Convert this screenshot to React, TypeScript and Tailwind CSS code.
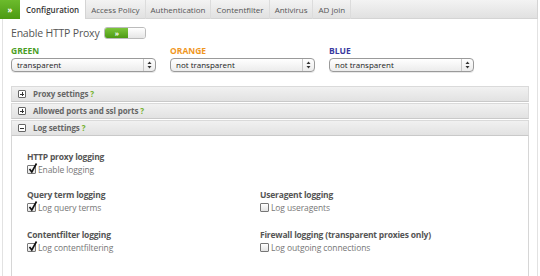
import React from "react";

const F = { fontFamily: '"Open Sans", "DejaVu Sans", sans-serif' };

function Sel({ value }: { value: string }) {
  return (
    <div className="flex items-center justify-between w-[145px] h-[14px] rounded-[4px] border border-[#9a9a9a] bg-gradient-to-b from-white to-[#ececec] pl-[5px] pr-[3px] shadow-[0_1px_0_#e8e8e8]">
      <span className="text-[8px] text-[#222] leading-none">{value}</span>
      <div className="flex items-center h-full border-l border-[#c8c8c8] pl-[3px]">
        <svg width="5" height="8" viewBox="0 0 5 8">
          <path d="M2.5 0.5 L4.5 3 H0.5 Z" fill="#333" />
          <path d="M2.5 7.5 L4.5 5 H0.5 Z" fill="#333" />
        </svg>
      </div>
    </div>
  );
}

function Box({ checked }: { checked: boolean }) {
  return (
    <div className="relative w-[9px] h-[9px] border border-[#777] rounded-[1px] bg-gradient-to-b from-white to-[#e4e4e4] shrink-0">
      {checked && (
        <svg className="absolute -top-[3px] left-0" width="10" height="11" viewBox="0 0 10 11">
          <path d="M1.5 6 L3.8 9 L8.5 0.5" stroke="#111" strokeWidth="1.6" fill="none" />
        </svg>
      )}
    </div>
  );
}

function Item({ title, label, checked }: { title: string; label: string; checked: boolean }) {
  return (
    <div className="flex flex-col gap-[2px]">
      <div className="text-[8.5px] font-bold text-[#555] leading-[11px] tracking-[-0.2px]">{title}</div>
      <div className="flex items-center gap-[2px]">
        <Box checked={checked} />
        <span className="text-[8.5px] text-[#777] leading-[11px] tracking-[-0.1px]">{label}</span>
      </div>
    </div>
  );
}

function Header({ title, open }: { title: string; open?: boolean }) {
  return (
    <div className="flex items-center h-[16px] mt-[1px] bg-gradient-to-b from-[#f1f1f1] to-[#e2e2e2] border border-[#dadada] border-b-[#c9c9c9] pl-[6px]">
      <div className="relative w-[8px] h-[8px] border border-[#666] rounded-[1px] bg-white flex items-center justify-center">
        <div className="w-[4px] h-[1px] bg-[#333]" />
        {!open && <div className="absolute w-[1px] h-[4px] bg-[#333]" />}
      </div>
      <span className="ml-[7px] text-[8px] font-bold text-[#666] tracking-[-0.1px]">
        {title} <span className="text-[#72b029]">?</span>
      </span>
    </div>
  );
}

const tabs = ["Access Policy", "Authentication", "Contentfilter", "Antivirus", "AD join"];

export default function App() {
  return (
    <div className="w-[540px] h-[276px] bg-white overflow-hidden" style={F}>
      <div className="w-[538px] h-[276px] flex flex-col">
        <div className="flex h-[19px] bg-gradient-to-b from-[#f3f3f3] to-[#e1e1e1] border-b border-r border-[#d4d4d4]">
          <div className="w-[20px] h-[19px] bg-gradient-to-b from-[#6cbb2c] to-[#4c9a12] flex items-center justify-center">
            <span className="text-white text-[8px] font-bold leading-none">»</span>
          </div>
          <div className="h-[19px] px-[6px] bg-white flex items-center text-[8px] text-[#333] font-semibold border-r border-[#d4d4d4] -mb-[1px]">
            Configuration
          </div>
          {tabs.map((t) => (
            <div key={t} className="h-[19px] px-[5px] flex items-center text-[8px] text-[#555] border-r border-[#dcdcdc]">
              {t}
            </div>
          ))}
        </div>
        <div className="flex-1 ml-[2px] border-l border-r border-[#e2e2e2] pl-[8px] pr-[8px]">
          <div className="flex items-center h-[20px] mt-[4px]">
            <span className="text-[10.5px] text-[#555] leading-none tracking-[-0.2px]">Enable HTTP Proxy</span>
            <div className="ml-[5px] flex w-[42px] h-[12px] rounded-[3px] border border-[#bbb] overflow-hidden">
              <div className="w-[23px] h-full bg-gradient-to-b from-[#7cc63a] to-[#4c9a12] flex items-center justify-center">
                <span className="text-white text-[7px] font-bold leading-none">»</span>
              </div>
              <div className="flex-1 bg-gradient-to-b from-white to-[#e6e6e6]" />
            </div>
          </div>
          <div className="flex gap-[14px] mt-[3px]">
            <div className="flex flex-col gap-[2px]">
              <div className="text-[8.5px] font-bold text-[#4a9e24] leading-[10px]">GREEN</div>
              <Sel value="transparent" />
            </div>
            <div className="flex flex-col gap-[2px]">
              <div className="text-[8.5px] font-bold text-[#f0961e] leading-[10px]">ORANGE</div>
              <Sel value="not transparent" />
            </div>
            <div className="flex flex-col gap-[2px]">
              <div className="text-[8.5px] font-bold text-[#3a3aa0] leading-[10px]">BLUE</div>
              <Sel value="not transparent" />
            </div>
          </div>
          <div className="mt-[14px]">
            <Header title="Proxy settings" />
            <Header title="Allowed ports and ssl ports" />
            <Header title="Log settings" open />
            <div className="h-[141px] border border-t-0 border-[#d6d6d6] pl-[15px] pt-[15px]">
              <Item title="HTTP proxy logging" label="Enable logging" checked />
              <div className="grid grid-cols-[233px_1fr] gap-y-[16px] mt-[14px]">
                <Item title="Query term logging" label="Log query terms" checked />
                <Item title="Useragent logging" label="Log useragents" checked={false} />
                <Item title="Contentfilter logging" label="Log contentfiltering" checked />
                <Item title="Firewall logging (transparent proxies only)" label="Log outgoing connections" checked={false} />
              </div>
            </div>
          </div>
        </div>
      </div>
    </div>
  );
}
